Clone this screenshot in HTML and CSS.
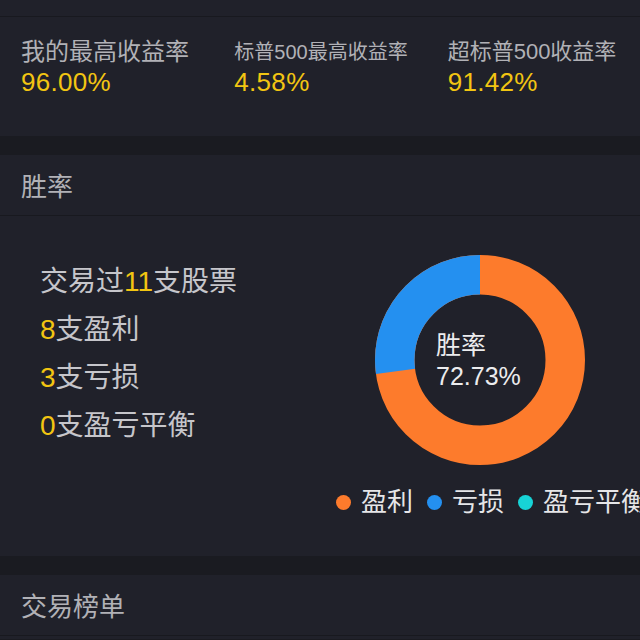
FILE: index.html
```html
<!DOCTYPE html>
<html lang="zh">
<head>
<meta charset="utf-8">
<link rel="stylesheet" href="styles.css">
</head>
<body>
<div class="page">
  <section class="card stats-card">
    <div class="top-strip"></div>
    <div class="stats">
      <div class="stat">
        <div class="stat-label lbl-24">我的最高收益率</div>
        <div class="stat-value">96.00%</div>
      </div>
      <div class="stat">
        <div class="stat-label lbl-20">标普500最高收益率</div>
        <div class="stat-value">4.58%</div>
      </div>
      <div class="stat">
        <div class="stat-label lbl-22">超标普500收益率</div>
        <div class="stat-value">91.42%</div>
      </div>
    </div>
  </section>

  <section class="card winrate-card">
    <div class="card-header">胜率</div>
    <div class="winrate-body">
      <div class="summary">
        <div class="summary-line">交易过<span class="hl">11</span>支股票</div>
        <div class="summary-line"><span class="hl">8</span>支盈利</div>
        <div class="summary-line"><span class="hl">3</span>支亏损</div>
        <div class="summary-line"><span class="hl">0</span>支盈亏平衡</div>
      </div>
      <div class="chart-col">
        <div class="donut">
          <svg width="210" height="210" viewBox="0 0 210 210">
            <circle cx="105" cy="105" r="85.25" fill="none" stroke="#fd7b2c" stroke-width="39.5"/>
            <circle cx="105" cy="105" r="85.25" fill="none" stroke="#2490f0" stroke-width="39.5"
              stroke-dasharray="146.07 600" stroke-dashoffset="-389.56" transform="rotate(-90 105 105)"/>
          </svg>
          <div class="donut-label">
            <div>胜率</div>
            <div>72.73%</div>
          </div>
        </div>
        <div class="legend">
          <div class="legend-item"><span class="dot dot-win"></span>盈利</div>
          <div class="legend-item"><span class="dot dot-loss"></span>亏损</div>
          <div class="legend-item"><span class="dot dot-even"></span>盈亏平衡</div>
        </div>
      </div>
    </div>
  </section>

  <section class="card rank-card">
    <div class="card-header">交易榜单</div>
  </section>
</div>
</body>
</html>
```

FILE: styles.css
```css
* { box-sizing: border-box; }
html, body {
  margin: 0;
  padding: 0;
  background: #1a1b21;
}
body {
  font-family: "Liberation Sans", "Noto Sans CJK SC", sans-serif;
  width: 640px;
  height: 640px;
  overflow: hidden;
}
.page {
  display: flex;
  flex-direction: column;
  gap: 19px;
}
.card {
  background: #20212a;
}
.top-strip {
  height: 17px;
  border-bottom: 1px solid #18191f;
}
.stats {
  display: flex;
  height: 119px;
}
.stat {
  flex: 1 1 0;
  padding: 22px 0 0 21px;
  white-space: nowrap;
}
.stat-label {
  color: #b1b1b6;
  height: 26px;
  line-height: 26px;
}
.lbl-24 { font-size: 24px; }
.lbl-20 { font-size: 20px; }
.lbl-22 { font-size: 22px; }
.stat-value {
  color: #f2c512;
  font-size: 26px;
  line-height: 30px;
  margin-top: 2px;
  letter-spacing: 0.3px;
}
.card-header {
  height: 61px;
  padding: 18px 0 0 21px;
  font-size: 26px;
  line-height: 28px;
  color: #b1b1b6;
  border-bottom: 1px solid #18191f;
}
.winrate-body {
  display: flex;
  height: 340px;
  overflow: hidden;
}
.summary {
  width: 320px;
  padding: 42px 0 0 40px;
}
.summary-line {
  font-size: 28px;
  line-height: 48px;
  color: #c6c6cb;
}
.hl { color: #f2c512; }
.chart-col {
  width: 320px;
  padding-top: 39px;
  overflow: hidden;
}
.donut {
  position: relative;
  width: 210px;
  height: 210px;
  margin-left: 55px;
}
.donut svg { display: block; }
.donut-label {
  position: absolute;
  left: 61px;
  top: 75px;
  color: #ececee;
  font-size: 25px;
  line-height: 31px;
}
.legend {
  display: flex;
  margin-top: 23px;
  margin-left: 16px;
  white-space: nowrap;
  gap: 14px;
}
.legend-item {
  display: flex;
  align-items: center;
  gap: 10px;
  font-size: 26px;
  line-height: 28px;
  color: #e6e6e8;
}
.dot {
  width: 15px;
  height: 15px;
  border-radius: 50%;
  flex: none;
}
.dot-win { background: #fd7b2c; }
.dot-loss { background: #2490f0; }
.dot-even { background: #17d3d6; }
.rank-card { height: 64px; }
```
